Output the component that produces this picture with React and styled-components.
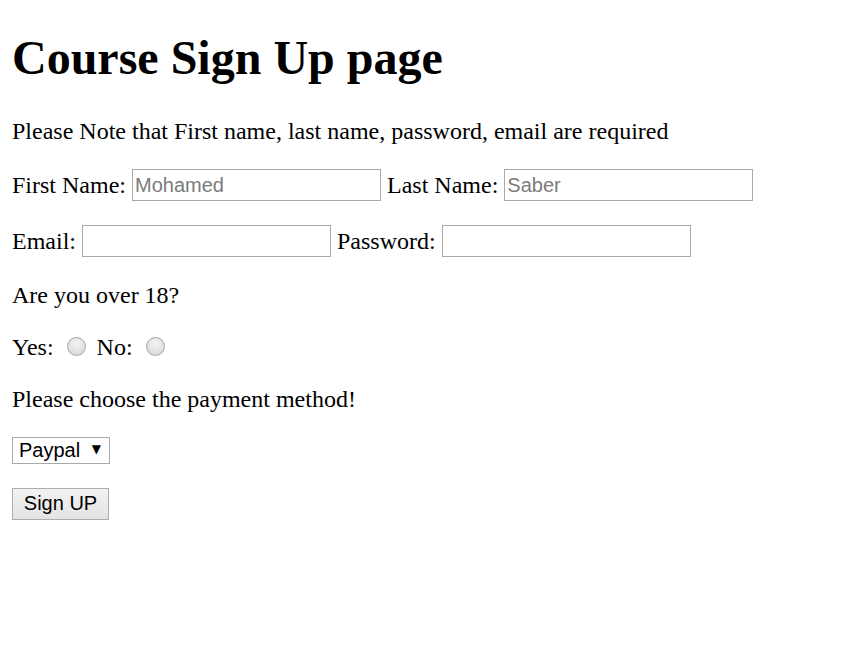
import styled, { createGlobalStyle } from "styled-components";

// page defaults, scaled like the screenshot (everything x1.5)
const Global = createGlobalStyle`
  html, body {
    margin: 0;
    background: #fff;
  }
  body {
    padding: 12px;
    font-family: "Liberation Serif", "Times New Roman", serif;
    font-size: 24px;
    color: #000;
  }
`;

const Page = styled.div`
  display: flex;
  flex-direction: column;
`;

const Title = styled.h1`
  margin: 18px 0 32px;
  font-size: 48px;
  font-weight: bold;
  line-height: 55px;
`;

const Form = styled.form`
  display: flex;
  flex-direction: column;
  align-items: flex-start;
  gap: 24px;
`;

const Line = styled.p`
  margin: 0;
  line-height: 28px;
`;

const Row = styled.div`
  display: flex;
  align-items: center;
  gap: 6px;
  line-height: 28px;
  min-height: ${(p) => p.$h || 28}px;
`;

const Field = styled.input`
  box-sizing: border-box;
  width: 249px;
  height: 32px;
  margin: 0;
  padding: 0 2px;
  border: 1px solid #a9a9a9;
  background: #fff;
  font-family: "Liberation Sans", Arial, sans-serif;
  font-size: 20px;
  color: #000;
  outline: none;

  &::placeholder {
    color: #7b7b7b;
  }
`;

const Radio = styled.input.attrs({ type: "radio" })`
  appearance: none;
  box-sizing: border-box;
  width: 19px;
  height: 19px;
  margin: 0 ${(p) => p.$right || 0}px 2px 7px;
  border-radius: 50%;
  border: 1px solid #a6a6a6;
  background: radial-gradient(circle at 50% 35%, #f4f4f4 0%, #e2e2e2 55%, #d2d2d2 100%);
`;

const SelectWrap = styled.span`
  position: relative;
  display: inline-block;
  margin-top: -1px;

  &::after {
    content: "▼";
    position: absolute;
    right: 9px;
    top: 5px;
    font-family: "DejaVu Sans", sans-serif;
    font-size: 12px;
    line-height: 16px;
    color: #000;
    pointer-events: none;
  }
`;

const Select = styled.select`
  appearance: none;
  box-sizing: border-box;
  width: 98px;
  height: 27px;
  margin: 0;
  padding: 0 0 0 6px;
  border: 1px solid #a9a9a9;
  border-radius: 0;
  background: #fff;
  font-family: "Liberation Sans", Arial, sans-serif;
  font-size: 20px;
  color: #000;
  outline: none;
`;

const Button = styled.button`
  box-sizing: border-box;
  width: 97px;
  height: 32px;
  margin: 0;
  padding: 0;
  border: 1px solid #adadad;
  border-radius: 0;
  background: linear-gradient(#f2f2f2, #e3e3e3);
  font-family: "Liberation Sans", Arial, sans-serif;
  font-size: 20px;
  color: #000;
`;

export default function App() {
  return (
    <Page>
      <Global />
      <Title>Course Sign Up page</Title>

      <Form onSubmit={(e) => e.preventDefault()}>
        <Line>Please Note that First name, last name, password, email are required</Line>

        <Row $h={32}>
          <span>First Name:</span>
          <Field type="text" placeholder="Mohamed" />
          <span>Last Name:</span>
          <Field type="text" placeholder="Saber" />
        </Row>

        <Row $h={32}>
          <span>Email:</span>
          <Field type="email" />
          <span>Password:</span>
          <Field type="password" />
        </Row>

        <Line>Are you over 18?</Line>

        <Row>
          <span>Yes:</span>
          <Radio name="age" value="yes" $right={5} />
          <span>No:</span>
          <Radio name="age" value="no" />
        </Row>

        <Line>Please choose the payment method!</Line>

        <SelectWrap>
          <Select defaultValue="paypal">
            <option value="paypal">Paypal</option>
            <option value="visa">Visa</option>
            <option value="mastercard">MasterCard</option>
          </Select>
        </SelectWrap>

        <Button type="submit">Sign UP</Button>
      </Form>
    </Page>
  );
}
